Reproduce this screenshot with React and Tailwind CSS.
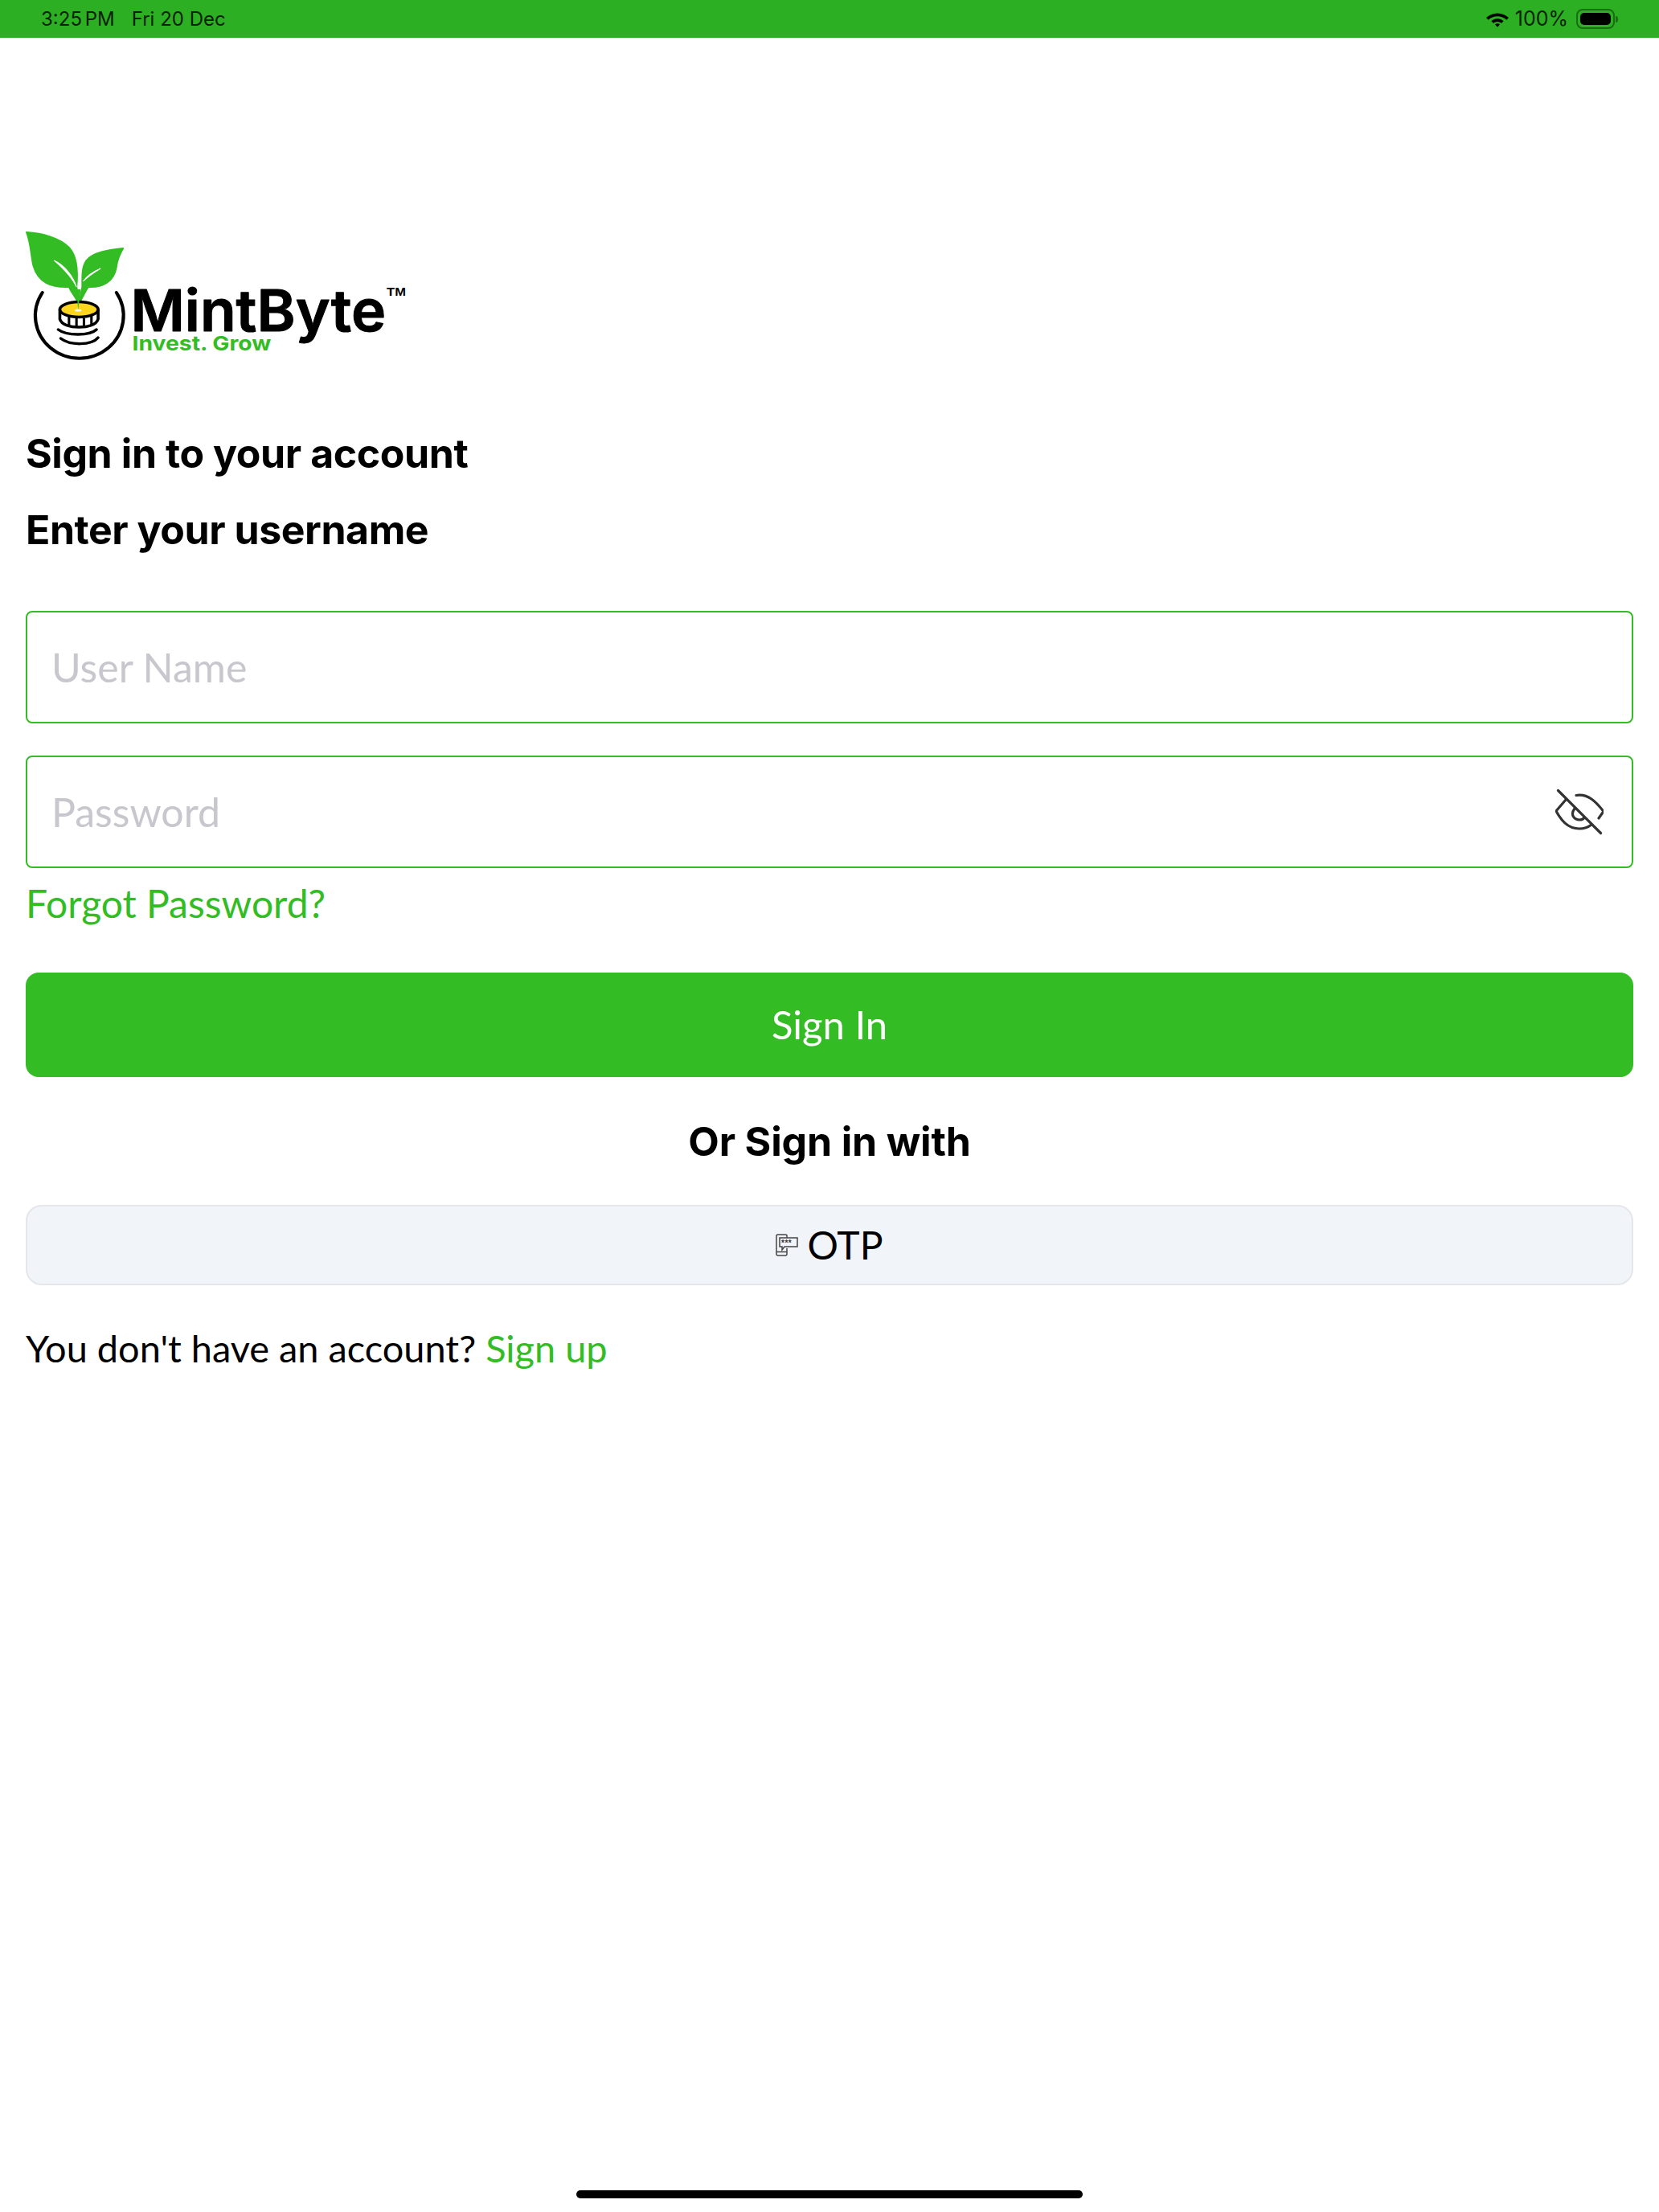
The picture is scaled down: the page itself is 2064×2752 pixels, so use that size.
import React from 'react';

const Logo = () => (
  <svg width="476" height="170" viewBox="30 25 460 170" preserveAspectRatio="none" className="block">
    {/* leaves */}
    <path d="M32 29 C50 30 72 36 83 48 C92 58 94 76 92 97 L95 118 C90 108 86 104 83 97 C62 98 46 92 40 70 C37 55 37 42 32 29 Z" fill="#33bc24" stroke="#33bc24" strokeWidth="2" strokeLinejoin="round" />
    <path d="M148 49 C130 51 112 54 104 64 C98 73 99 85 99 97 L95 118 C100 108 103 102 106 97 C124 98 137 90 140 72 C141 62 144 56 148 49 Z" fill="#33bc24" stroke="#33bc24" strokeWidth="2" strokeLinejoin="round" />
    <path d="M65 64 C78 70 88 84 92 97 C86 84 76 74 65 64 Z" fill="#fff" stroke="#fff" strokeWidth="1" />
    <path d="M121 74 C112 78 104 84 100 90 C106 84 113 79 121 74 Z" fill="#fff" stroke="#fff" strokeWidth="1" />
    {/* ring */}
    <path d="M51 104 A53 53 0 1 0 140 104" fill="none" stroke="#000" strokeWidth="4" strokeLinecap="round" />
    {/* coin */}
    <path d="M72 125 L72 137 C74 144 84 147 95 147 C106 147 116 144 118 137 L118 125" fill="#fff" stroke="#000" strokeWidth="3.5" />
    <g stroke="#000" strokeWidth="3">
      <line x1="83" y1="134" x2="83" y2="146" />
      <line x1="92" y1="136" x2="92" y2="147" />
      <line x1="101" y1="136" x2="101" y2="147" />
      <line x1="110" y1="133" x2="110" y2="145" />
    </g>
    <ellipse cx="95" cy="125" rx="23" ry="9.5" fill="#fdd51f" stroke="#000" strokeWidth="3.5" />
    <ellipse cx="94" cy="126" rx="4" ry="1.6" fill="#fff" />
    <path d="M94 126 L92 100 L97 100 Z" fill="#33bc24" />
    {/* stack */}
    <path d="M70 150 C80 158 108 158 116 150" fill="none" stroke="#000" strokeWidth="3.5" strokeLinecap="round" />
    <path d="M73 161 C84 170 110 170 118 160" fill="none" stroke="#000" strokeWidth="3.5" strokeLinecap="round" />
    {/* wordmark */}
    <text x="157" y="152" textLength="307" lengthAdjust="spacingAndGlyphs" fontFamily="'Inter', sans-serif" fontWeight="600" fontSize="72" fill="#000" stroke="#000" strokeWidth="1" strokeLinejoin="round">MintByte</text>
    <text x="159" y="176" textLength="167" lengthAdjust="spacingAndGlyphs" fontFamily="'Inter', sans-serif" fontWeight="700" fontSize="25" fill="#33bc24">Invest. Grow</text>
    <text x="465" y="108" textLength="23" lengthAdjust="spacingAndGlyphs" fontFamily="'Liberation Sans', sans-serif" fontWeight="700" fontSize="15" fill="#000">TM</text>
  </svg>
);

const EyeOff = () => (
  <svg width="60" height="60" viewBox="35 20 60 60" fill="none" stroke="#333" strokeWidth="3.2" strokeLinecap="round" strokeLinejoin="round">
    <path d="M38.5 23.5 L91.5 76.5" />
    <path d="M48 35 L36 49 C42 60 50 71 65 71 C71 71 76 69 80 66" />
    <path d="M61 29.5 C76 27 86 38 95 49.5 L89 58" />
    <path d="M59 46 C53 54 59 60 65 60 C68 60 70 59 71 57" />
  </svg>
);

const OtpIcon = () => (
  <svg width="28" height="28" viewBox="0 0 28 28" fill="none" stroke="#444" strokeWidth="1.5">
    <path d="M14 5 V2.5 C14 1.5 13 1 12 1 H3 C2 1 1 1.5 1 2.5 V25 C1 26 2 27 3 27 H12 C13 27 14 26 14 25 V18" />
    <path d="M1 22.5 H14" />
    <path d="M5 5 H27 V16 H11 L8 20 V16 H5 Z" fill="#f1f4f9" />
    <text x="7" y="15" fontFamily="'Liberation Sans', sans-serif" fontWeight="700" fontSize="10" fill="#333" stroke="none" letterSpacing="0.5">***</text>
  </svg>
);

const Wifi = () => (
  <svg width="30" height="22" viewBox="0 0 28 20" fill="#000">
    <path d="M14 3 C19 3 23.5 5 27 8.2 L24.6 10.8 C21.8 8.2 18 6.6 14 6.6 C10 6.6 6.2 8.2 3.4 10.8 L1 8.2 C4.5 5 9 3 14 3 Z" />
    <path d="M14 9.2 C16.7 9.2 19.2 10.2 21.1 12 L18.7 14.5 C17.4 13.4 15.8 12.7 14 12.7 C12.2 12.7 10.6 13.4 9.3 14.5 L6.9 12 C8.8 10.2 11.3 9.2 14 9.2 Z" />
    <path d="M14 15 C15 15 16 15.4 16.7 16 L14 19 L11.3 16 C12 15.4 13 15 14 15 Z" />
  </svg>
);

const App = () => {
  return (
    <div className="flex flex-col h-[2752px] w-full bg-white font-['Lato',sans-serif] text-black">
      {/* status bar */}
      <div className="flex items-center justify-between h-[47px] bg-[#2caf22] pl-[51px] pr-[51px] font-['Inter',sans-serif] text-[24px] text-[#0a1f08]">
        <div className="flex gap-[21px]">
          <span className="[word-spacing:-3px]">3:25 PM</span>
          <span>Fri 20 Dec</span>
        </div>
        <div className="flex items-center">
          <Wifi />
          <span className="ml-[7px] text-[25px]">100%</span>
          <div className="ml-[10px] w-[48px] h-[25px] p-[3px] rounded-[8px] border-2 border-[#1a6d14]">
            <div className="w-full h-full rounded-[5px] bg-black" />
          </div>
          <div className="ml-[1px] w-[3px] h-[8px] rounded-r-sm bg-[#1a6d14]" />
        </div>
      </div>

      <div className="flex flex-col flex-1 px-[32px]">
        <div className="mt-[238px] -ml-[1px]">
          <Logo />
        </div>

        <h1 className="mt-[77px] font-['Inter',sans-serif] text-[50px] leading-[64px] font-bold tracking-[-0.42px]">Sign in to your account</h1>
        <h2 className="mt-[31px] font-['Inter',sans-serif] text-[50px] leading-[64px] font-bold tracking-[-0.45px]">Enter your username</h2>

        <input
          placeholder="User Name"
          className="mt-[69px] w-full h-[140px] px-[30px] rounded-[8px] border-2 border-[#33bc24] bg-white text-[50px] outline-none placeholder:text-[#c7c7cd]"
        />
        <div className="mt-[40px] flex items-center h-[140px] pl-[30px] pr-[35px] rounded-[8px] border-2 border-[#33bc24]">
          <input
            placeholder="Password"
            className="flex-1 bg-transparent text-[50px] outline-none placeholder:text-[#c7c7cd]"
          />
          <EyeOff />
        </div>

        <a href="#" className="mt-[12px] text-[48px] leading-[64px] text-[#33bc24]">Forgot Password?</a>

        <button className="mt-[54px] w-full h-[130px] rounded-[16px] bg-[#33bc24] text-[49px] text-white">Sign In</button>

        <div className="mt-[48px] text-center font-['Inter',sans-serif] text-[50px] leading-[64px] font-bold tracking-[-0.15px]">Or Sign in with</div>

        <button className="mt-[47px] flex items-center justify-center gap-[11px] w-full h-[100px] rounded-[20px] border-2 border-[#e4e6eb] bg-[#f1f4f9] text-[48px]">
          <OtpIcon />
          <span>OTP</span>
        </button>

        <p className="mt-[46px] text-[46.9px] leading-[64px]">
          You don't have an account? <a href="#" className="text-[#33bc24]">Sign up</a>
        </p>

        {/* home indicator */}
        <div className="mt-auto mb-[17px] mx-auto w-[630px] h-[10px] rounded-full bg-black" />
      </div>
    </div>
  );
};

export default App;
